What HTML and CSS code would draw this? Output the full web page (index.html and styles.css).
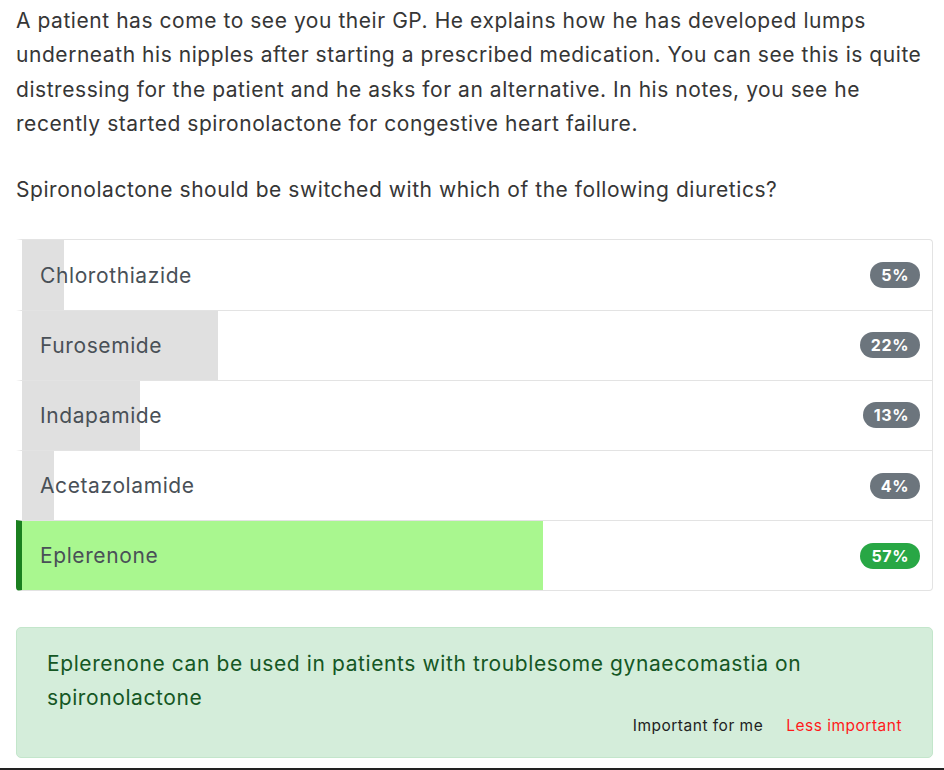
FILE: index.html
```html
<!DOCTYPE html>
<html lang="en">
<head>
<meta charset="utf-8">
<title>Question</title>
<link rel="stylesheet" href="styles.css">
</head>
<body>
<main class="page">
  <p class="stem">A patient has come to see you their GP. He explains how he has developed lumps underneath his nipples after starting a prescribed medication. You can see this is quite distressing for the patient and he asks for an alternative. In his notes, you see he recently started spironolactone for congestive heart failure.</p>
  <p class="stem">Spironolactone should be switched with which of the following diuretics?</p>
  <ul class="options">
    <li class="option" style="--pct: 4.6%"><span class="label">Chlorothiazide</span><span class="badge">5%</span></li>
    <li class="option" style="--pct: 21.5%"><span class="label">Furosemide</span><span class="badge">22%</span></li>
    <li class="option" style="--pct: 13%"><span class="label">Indapamide</span><span class="badge">13%</span></li>
    <li class="option" style="--pct: 3.5%"><span class="label">Acetazolamide</span><span class="badge">4%</span></li>
    <li class="option correct" style="--pct: 57.2%"><span class="label">Eplerenone</span><span class="badge badge-green">57%</span></li>
  </ul>
  <section class="feedback">
    <p class="explain">Eplerenone can be used in patients with troublesome gynaecomastia on spironolactone</p>
    <div class="actions">
      <span class="action">Important for me</span>
      <span class="action less">Less important</span>
    </div>
  </section>
</main>
<div class="footer-bar"></div>
</body>
</html>
```
FILE: styles.css
```css
html, body {
  margin: 0;
  padding: 0;
  background: #fff;
}
body {
  font-family: Inter, "Noto Sans", "Liberation Sans", sans-serif;
  color: #333;
}
.page {
  padding: 4px 11px 0 16px;
}
.stem {
  margin: 0 0 32px;
  font-size: 21px;
  letter-spacing: 0.55px;
  line-height: 34.3px;
  color: #363636;
}
.options {
  list-style: none;
  margin: 0;
  padding: 0;
  border-radius: 4px;
}
.option {
  display: flex;
  align-items: center;
  justify-content: space-between;
  height: 69.2px;
  padding: 0 12px 0 18px;
  border: 1px solid #e3e3e3;
  border-left: 6px solid transparent;
  border-bottom: none;
  background-image: linear-gradient(to right, #e0e0e0 var(--pct), transparent var(--pct));
  background-repeat: no-repeat;
  background-clip: padding-box;
  font-size: 21px;
  letter-spacing: 0.6px;
  color: #495057;
}
.option:first-child {
  border-top-right-radius: 4px;
}
.option:last-child {
  border-bottom: 1px solid #e3e3e3;
  border-bottom-right-radius: 4px;
  border-bottom-left-radius: 4px;
}
.option.correct {
  border-left-color: #1a7f1f;
  background-image: linear-gradient(to right, #a9f78f var(--pct), transparent var(--pct));
}
.badge {
  display: inline-block;
  padding: 4px 11px;
  border-radius: 13px;
  background: #6c757d;
  color: #fff;
  font-size: 16px;
  font-weight: 700;
  letter-spacing: 0.6px;
  line-height: 18px;
}
.badge-green {
  background: #28a745;
}
.feedback {
  margin-top: 36px;
  padding: 19px 30px 20px;
  background: #d4edda;
  border: 1px solid #c3e6cb;
  border-radius: 5px;
  color: #155724;
}
.explain {
  margin: 0;
  font-size: 21px;
  letter-spacing: 0.6px;
  line-height: 34px;
}
.actions {
  display: flex;
  justify-content: flex-end;
  gap: 23px;
  font-size: 15.5px;
  letter-spacing: 0.5px;
  line-height: 22px;
}
.action {
  color: #222;
}
.action.less {
  color: #ff1a1a;
}
.footer-bar {
  margin-top: 10px;
  height: 4px;
  background: #222;
}
```
